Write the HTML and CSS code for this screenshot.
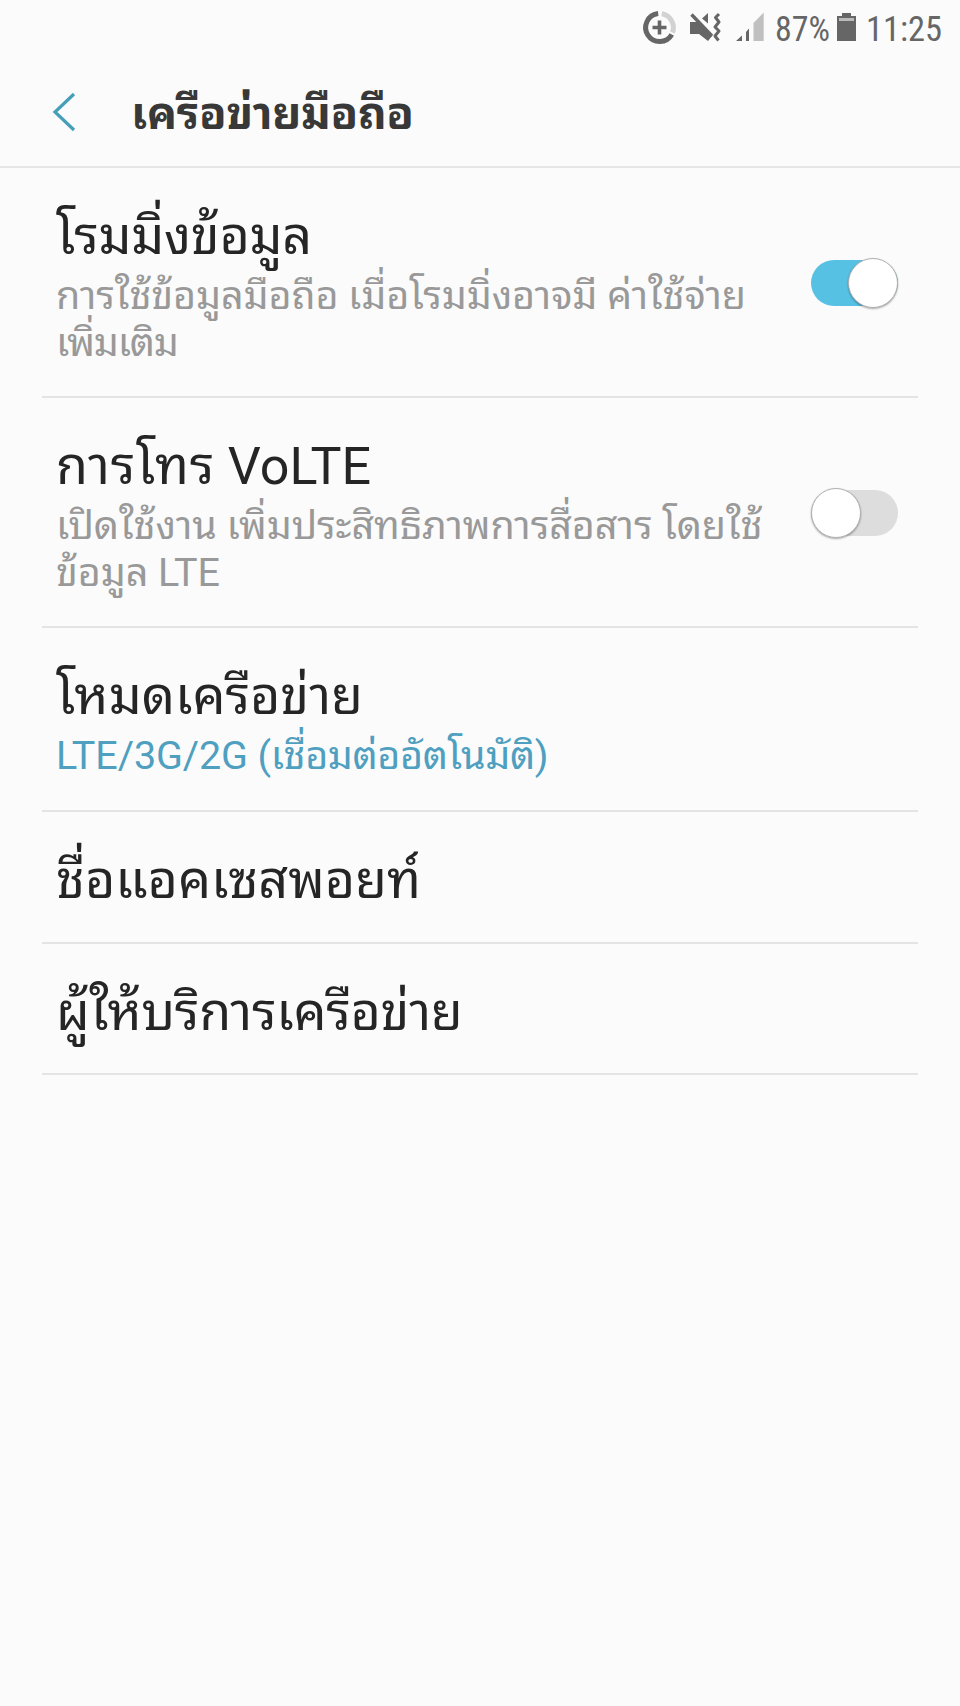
FILE: index.html
```html
<!DOCTYPE html>
<html lang="th">
<head>
<meta charset="utf-8">
<title>เครือข่ายมือถือ</title>
<link rel="stylesheet" href="styles.css">
</head>
<body>
<div class="status">
<svg width="136" height="56" viewBox="640 0 136 56">
<g fill="none" stroke="#666" stroke-width="5">
<path d="M658.2 13.6A14 14 0 1 0 671.8 34.5"/>
<path d="M661.8 13.8A14 14 0 0 1 672.5 32.5" stroke="#d2d2d2"/>
<path d="M659.5 20.5V34.5M652.5 27.5H666.5" stroke-width="3.6"/>
</g>
<path d="M690 22H697L712 36L708 41L699 34H690Z" fill="#666"/>
<path d="M702 18.5L708 13V23.5Z" fill="#666"/>
<path d="M691.5 14.5L712 36" stroke="#666" stroke-width="3.4"/>
<path d="M719 14L715.5 17.5L719 22L715 27L719 31L715 36L718.5 40.5" fill="none" stroke="#666" stroke-width="3" stroke-linejoin="round"/>
<path d="M742 35.5V41H736Z M746 32L749 28.5V41H746Z" fill="#666"/>
<path d="M753.5 23L763.7 12.5V41H753.5Z" fill="#c0c0c0"/>
</svg>
<svg width="60" height="56" viewBox="776 0 60 56"><text class="stat-text" x="775" y="41" textLength="55" lengthAdjust="spacingAndGlyphs">87%</text></svg>
<svg width="24" height="56" viewBox="836 0 24 56"><path d="M842 13H851V16H856V41H837V16H842Z" fill="#666"/><path d="M839 18H854V21H839Z" fill="#bbb"/></svg>
<svg width="100" height="56" viewBox="860 0 100 56"><text class="stat-text" x="866" y="41" textLength="76" lengthAdjust="spacingAndGlyphs">11:25</text></svg>
</div>
<header class="bar">
<svg class="back" width="24" height="40" viewBox="0 0 24 40"><path d="M22 2L3 20L22 38" fill="none" stroke="#459fb8" stroke-width="3.2"/></svg>
<h1 class="title">เครือข่ายมือถือ</h1>
</header>
<main class="list">
<section class="row row-tall"><div class="texts"><h2 class="name snug">โรมมิ่งข้อมูล</h2><p class="desc">การใช้ข้อมูลมือถือ เมื่อโรมมิ่งอาจมี ค่าใช้จ่าย<br><span class="tight">เพิ่มเติม</span></p></div><div class="switch on"><span class="knob"></span></div></section>
<section class="row row-tall"><div class="texts"><h2 class="name"><span class="wide">การโทร</span> VoLTE</h2><p class="desc">เปิดใช้งาน เพิ่มประสิทธิภาพการสื่อสาร โดยใช้<br>ข้อมูล LTE</p></div><div class="switch"><span class="knob"></span></div></section>
<section class="row row-mid"><div class="texts"><h2 class="name">โหมดเครือข่าย</h2><p class="desc link">LTE/3G/2G <span class="close">(เชื่อมต่ออัตโนมัติ)</span></p></div></section>
<section class="row row-short"><div class="texts"><h2 class="name">ชื่อแอคเซสพอยท์</h2></div></section>
<section class="row row-short"><div class="texts"><h2 class="name snug">ผู้ให้บริการเครือข่าย</h2></div></section>
</main>
</body>
</html>
```
FILE: styles.css
```css
* { box-sizing: border-box; margin: 0; padding: 0; }
body { background: #fbfbfb; font-family: Roboto, "Noto Sans Thai Looped", "Noto Looped Thai", "Droid Sans Thai", Loma, Waree, Garuda, Umpush, sans-serif; height: 1706px; }
.status { display: flex; height: 56px; justify-content: flex-end; }
.stat-text { font-family: "Roboto Condensed", Roboto, sans-serif; font-size: 34.5px; fill: #666; }
.bar { height: 112px; display: flex; align-items: center; padding: 2px 0 0 52px; border-bottom: 2px solid #e6e6e6; }
.title { margin-left: 55px; padding-top: 3px; font-size: 45px; line-height: 56px; letter-spacing: -0.3px; color: #383838; }
.list { padding: 0 42px; }
.row { display: flex; justify-content: space-between; padding: 38px 20px 0 14px; border-bottom: 2px solid #e4e4e4; white-space: nowrap; }
.row-tall { height: 230px; }
.row-mid { height: 184px; }
.row-short { height: 131.5px; }
.name { font-size: 52px; font-weight: 400; line-height: 62px; color: #252525; }
.snug { letter-spacing: -0.25px; }
.wide { letter-spacing: 0.7px; }
.tight { letter-spacing: -1.2px; }
.close { letter-spacing: -0.4px; }
.desc { font-size: 39.5px; line-height: 47px; letter-spacing: -0.1px; color: #999; padding-top: 4px; }
.link { color: #4f9fc0; }
.switch { display: flex; align-items: center; width: 87px; height: 46px; border-radius: 23px; background: #ddd; margin-top: 54px; }
.knob { flex: none; width: 50px; height: 50px; border-radius: 50%; background: #fff; border: 1px solid #b0b0b0; box-shadow: 0 1px 2px #0005; }
.on { background: #57c1e4; justify-content: flex-end; }
```
